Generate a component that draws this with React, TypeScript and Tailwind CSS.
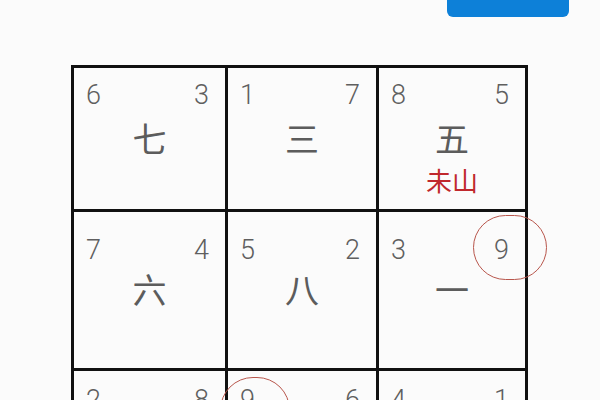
import React from 'react';

interface Cell {
  left: string;
  right: string;
  star: string;
  label?: string;
  circle?: 'right' | 'left';
}

const rows: { height: string; pad: string; cells: Cell[] }[] = [
  {
    height: 'h-[141px]',
    pad: 'pt-[14px]',
    cells: [
      { left: '6', right: '3', star: '七' },
      { left: '1', right: '7', star: '三' },
      { left: '8', right: '5', star: '五', label: '未山' },
    ],
  },
  {
    height: 'h-[156px]',
    pad: 'pt-[25px]',
    cells: [
      { left: '7', right: '4', star: '六' },
      { left: '5', right: '2', star: '八' },
      { left: '3', right: '9', star: '一', circle: 'right' },
    ],
  },
  {
    height: 'h-[156px]',
    pad: 'pt-[16px]',
    cells: [
      { left: '2', right: '8', star: '二' },
      { left: '9', right: '6', star: '四', circle: 'left' },
      { left: '4', right: '1', star: '九' },
    ],
  },
];

const digitFont = { fontFamily: 'Roboto, "Noto Sans", sans-serif' };
const cjkFont = { fontFamily: '"Noto Sans", "Noto Sans CJK SC", sans-serif' };

const FlyingStarCell: React.FC<{ cell: Cell; height: string; pad: string }> = ({ cell, height, pad }) => {
  return (
    <div className={`relative grid bg-[#fbfbfb] ${height}`}>
      {/* corner numbers */}
      <div
        className={`col-start-1 row-start-1 self-start flex justify-between pl-[12px] pr-[16px] ${pad} text-[27px] font-light leading-none text-[#5f5f5f]`}
        style={digitFont}
      >
        <span>{cell.left}</span>
        <span>{cell.right}</span>
      </div>

      {/* period star */}
      <div
        className="col-start-1 row-start-1 self-center justify-self-center flex flex-col items-center"
        style={cjkFont}
      >
        {cell.label && <span className="invisible mb-[12px] text-[26px] leading-none">{cell.label}</span>}
        <span className="text-[34px] font-normal leading-none text-[#5c5c5c]">{cell.star}</span>
        {cell.label && (
          <span className="mt-[12px] text-[26px] leading-none text-[#c0282d]">{cell.label}</span>
        )}
      </div>

      {cell.circle === 'right' && (
        <div className="absolute z-10 left-[94px] top-[3px] w-[74px] h-[65px] rounded-full border-[1.5px] border-[#b8564c]" />
      )}
      {cell.circle === 'left' && (
        <div className="absolute z-10 left-[-8px] top-[6px] w-[70px] h-[66px] rounded-full border-[1.5px] border-[#b8564c]" />
      )}
    </div>
  );
};

const App: React.FC = () => {
  return (
    <div className="w-[600px] h-[400px] overflow-hidden bg-[#fbfbfb]">
      {/* Top action button (cut off) */}
      <div className="flex justify-end pr-[31px]">
        <button className="w-[122px] h-[40px] -mt-[23px] rounded-[6px] bg-[#0d80d8]" />
      </div>

      {/* Flying star chart */}
      <div className="mt-[48px] ml-[71px] w-[457px] grid grid-cols-[151px_148px_146px] gap-[3px] p-[3px] bg-[#111111]">
        {rows.map((row, r) =>
          row.cells.map((cell, c) => (
            <FlyingStarCell key={`${r}-${c}`} cell={cell} height={row.height} pad={row.pad} />
          ))
        )}
      </div>
    </div>
  );
};

export default App;
